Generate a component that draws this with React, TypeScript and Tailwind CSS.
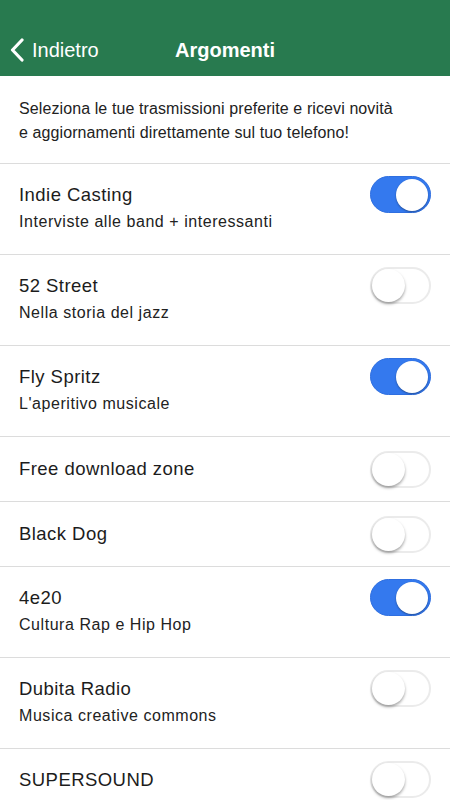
const font = { fontFamily: '"Liberation Sans", Arial, sans-serif' };

type Topic = { title: string; subtitle?: string; on: boolean };

const topics: Topic[] = [
  { title: "Indie Casting", subtitle: "Interviste alle band + interessanti", on: true },
  { title: "52 Street", subtitle: "Nella storia del jazz", on: false },
  { title: "Fly Spritz", subtitle: "L'aperitivo musicale", on: true },
  { title: "Free download zone", on: false },
  { title: "Black Dog", on: false },
  { title: "4e20", subtitle: "Cultura Rap e Hip Hop", on: true },
  { title: "Dubita Radio", subtitle: "Musica creative commons", on: false },
  { title: "SUPERSOUND", subtitle: "Suoni e novità", on: false },
];

function Toggle({ on }: { on: boolean }) {
  if (on) {
    return (
      <div className="relative w-[61px] h-[37px] shrink-0 rounded-full bg-[#3479ee] border border-[#2f6fe0]">
        <div className="absolute right-[2px] top-[2px] w-[32px] h-[32px] rounded-full bg-white shadow-[0_1px_2px_rgba(0,0,0,0.35)]" />
      </div>
    );
  }
  return (
    <div className="relative w-[61px] h-[37px] shrink-0 rounded-full bg-white border-2 border-[#ebebeb]">
      <div className="absolute left-[0px] top-[0px] w-[33px] h-[33px] rounded-full bg-white shadow-[0_2px_3px_rgba(0,0,0,0.35)]" />
    </div>
  );
}

function Row({ t }: { t: Topic }) {
  if (!t.subtitle) {
    return (
      <div className="flex items-center justify-between h-[65px] pl-[19px] pr-[19px] border-b border-[#dcdcdc]">
        <span className="text-[18.5px] leading-[26px] tracking-[0.45px] text-[#1c1c1c]">{t.title}</span>
        <Toggle on={t.on} />
      </div>
    );
  }
  return (
    <div className="flex items-start justify-between h-[91px] pt-[12px] pl-[19px] pr-[19px] border-b border-[#dcdcdc]">
      <div className="flex flex-col">
        <span className="mt-[6px] text-[18.5px] leading-[26px] tracking-[0.45px] text-[#1c1c1c]">{t.title}</span>
        <span className="mt-[4px] text-[16px] leading-[20px] tracking-[0.55px] text-[#222]">{t.subtitle}</span>
      </div>
      <Toggle on={t.on} />
    </div>
  );
}

export default function App() {
  return (
    <div className="w-[450px] h-[800px] overflow-hidden bg-white" style={font}>
      {/* Nav bar */}
      <div className="h-[76px] bg-[#287a4f] pt-[24px]">
        <div className="relative h-[52px] flex items-center">
          <div className="flex items-center pl-[10px] gap-[8px] text-white">
            <svg width="14" height="24" viewBox="0 0 14 24" fill="none">
              <path d="M12 2 L2.5 12 L12 22" stroke="white" strokeWidth="3.2" strokeLinecap="round" strokeLinejoin="round" />
            </svg>
            <span className="text-[20px] leading-[24px]">Indietro</span>
          </div>
          <div className="absolute inset-x-0 text-center text-white text-[20px] font-semibold leading-[24px] pointer-events-none">
            Argomenti
          </div>
        </div>
      </div>

      {/* Intro */}
      <div className="h-[88px] pt-[21px] px-[19px] border-b border-[#dcdcdc]">
        <p className="text-[16px] leading-[24px] tracking-[0.1px] text-[#222]">
          Seleziona le tue trasmissioni preferite e ricevi novità
          <br />
          e aggiornamenti direttamente sul tuo telefono!
        </p>
      </div>

      {topics.map((t) => (
        <Row key={t.title} t={t} />
      ))}
    </div>
  );
}
